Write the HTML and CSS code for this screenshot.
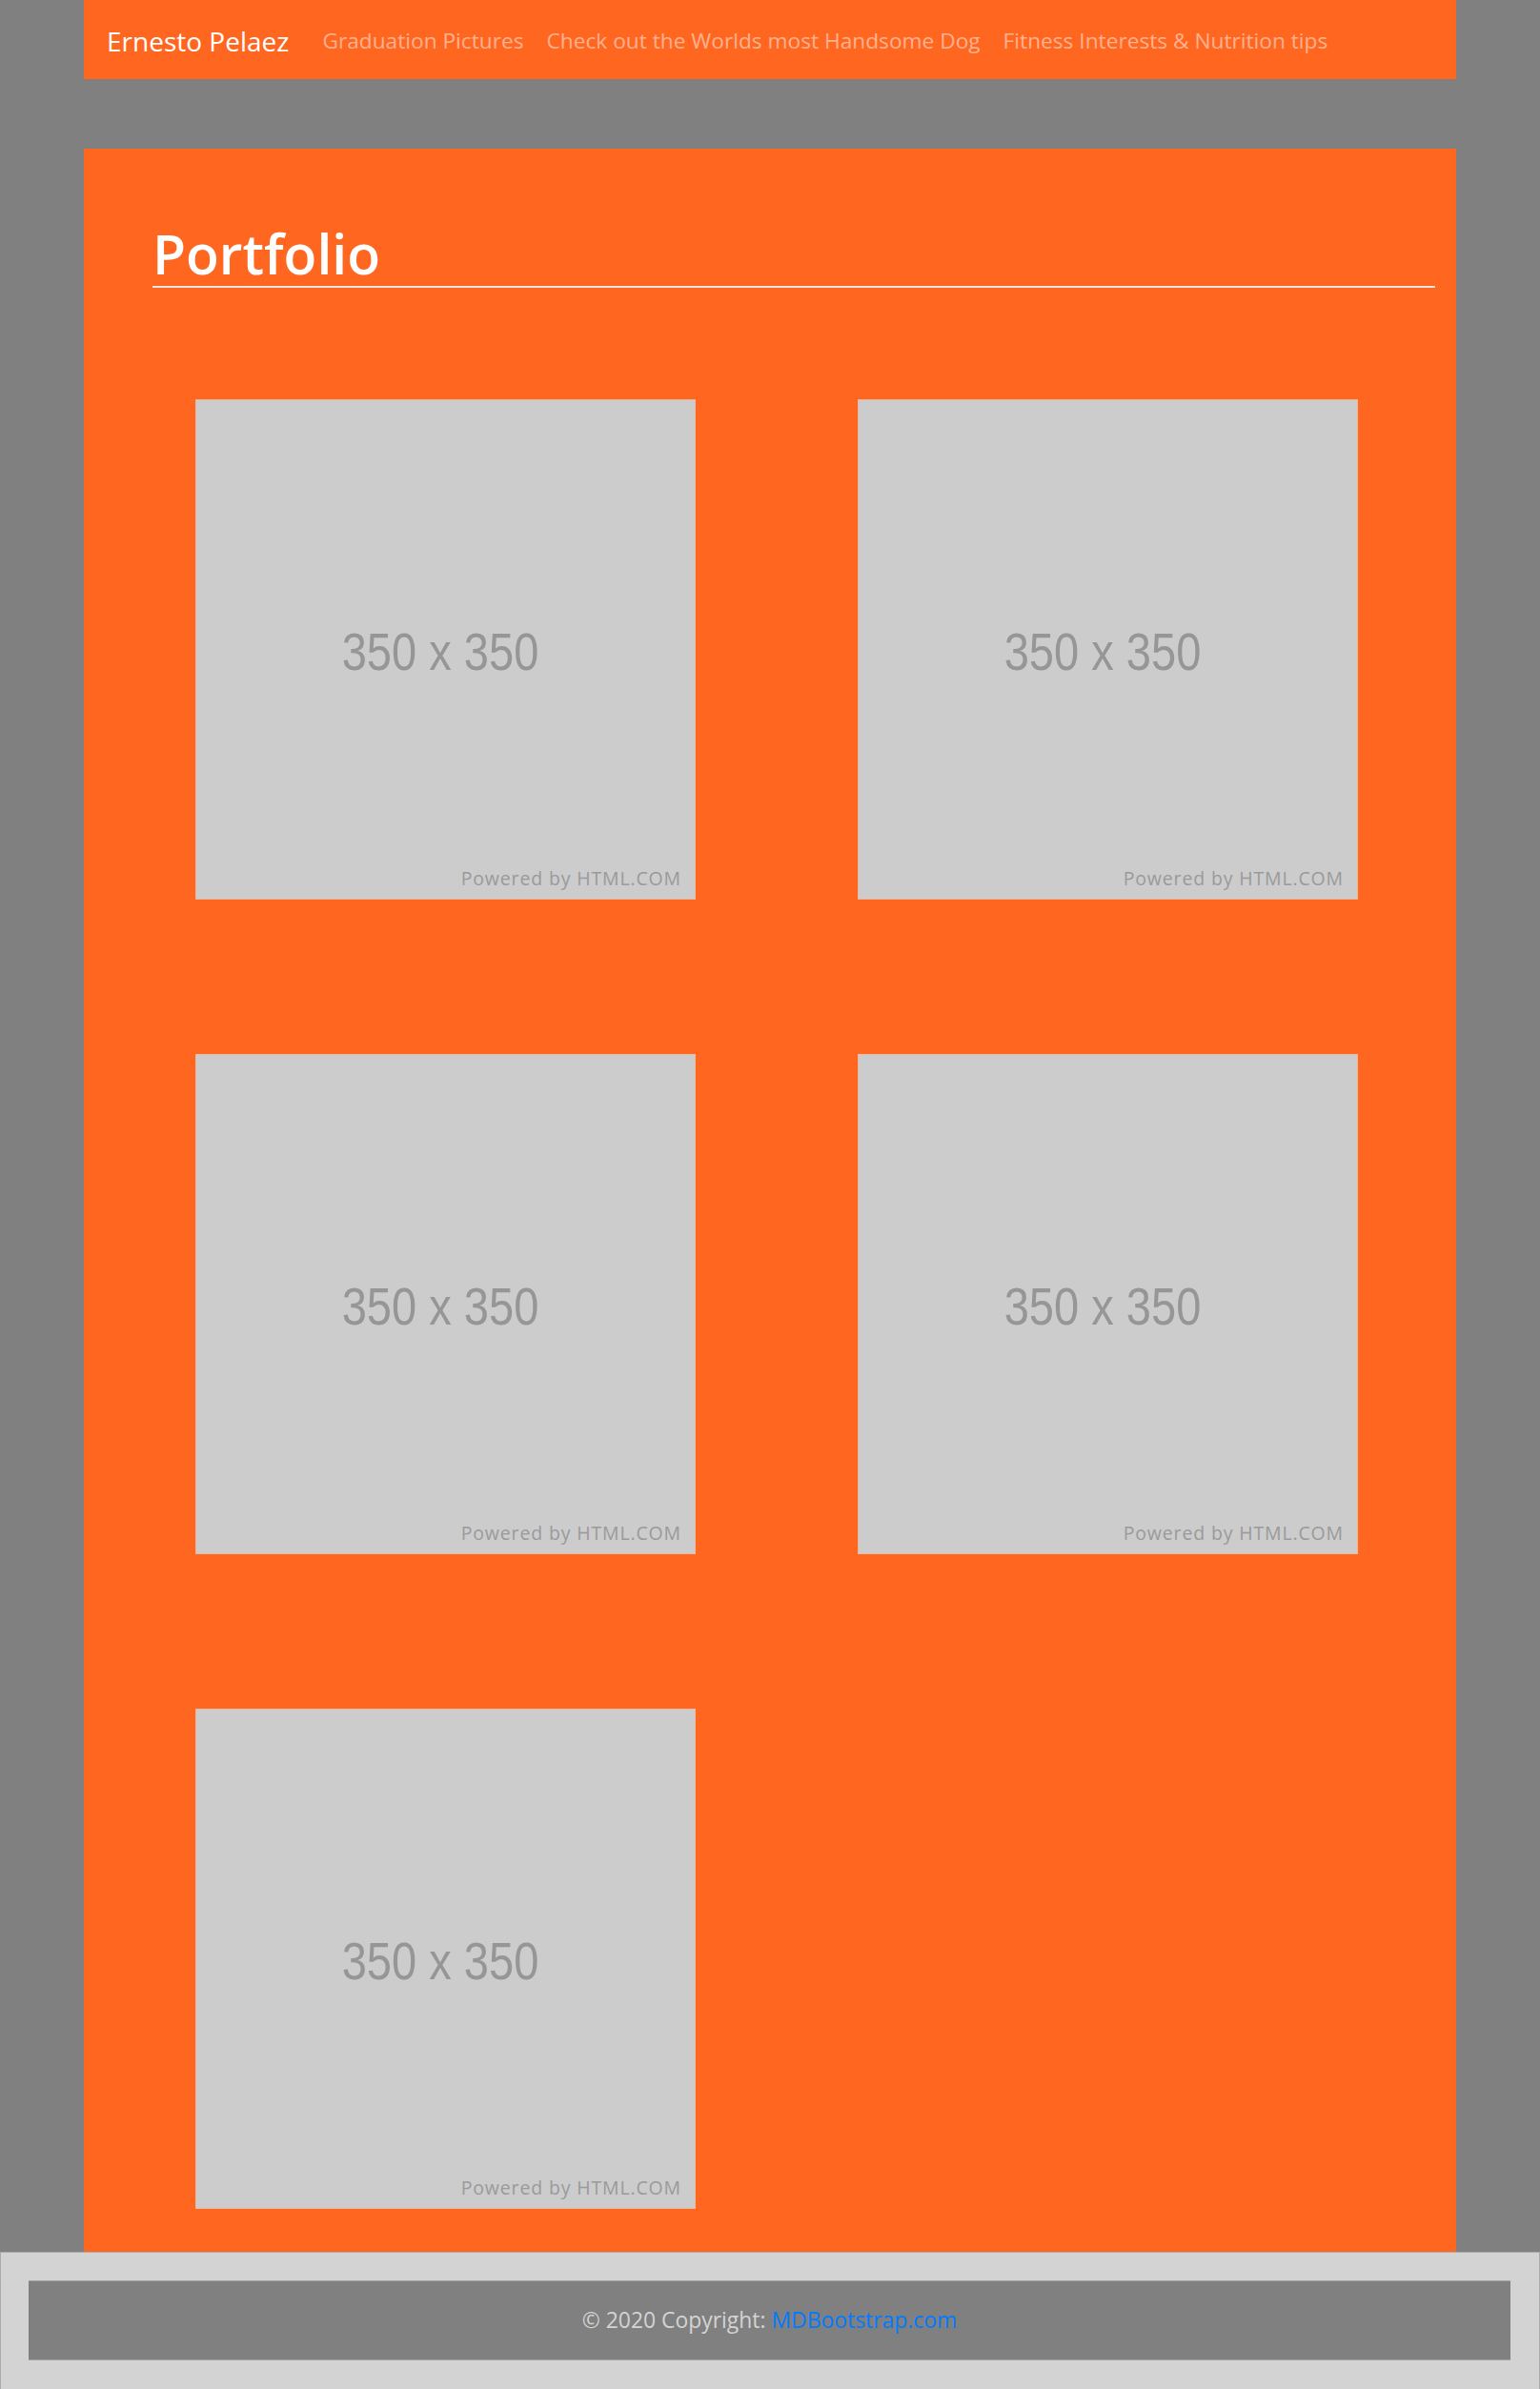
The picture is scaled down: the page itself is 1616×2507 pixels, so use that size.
FILE: index.html
```html
<!DOCTYPE html>
<html lang="en">
<head>
<meta charset="utf-8">
<title>Portfolio</title>
<link rel="stylesheet" href="styles.css">
</head>
<body>
<div class="container">
  <nav class="navbar">
    <a class="brand" href="#">Ernesto Pelaez</a>
    <ul class="nav">
      <li><a class="nav-link" href="#">Graduation Pictures</a></li>
      <li><a class="nav-link" href="#">Check out the Worlds most Handsome Dog</a></li>
      <li><a class="nav-link" href="#">Fitness Interests &amp; Nutrition tips</a></li>
    </ul>
  </nav>

  <section class="card">
    <div class="card-head">
      <h1 class="title">Portfolio</h1>
      <hr class="rule">
    </div>
    <div class="gallery">
      <div class="ph"><span class="ph-size">350 x 350</span><span class="ph-credit">Powered by HTML.COM</span></div>
      <div class="ph"><span class="ph-size">350 x 350</span><span class="ph-credit">Powered by HTML.COM</span></div>
      <div class="ph"><span class="ph-size">350 x 350</span><span class="ph-credit">Powered by HTML.COM</span></div>
      <div class="ph"><span class="ph-size">350 x 350</span><span class="ph-credit">Powered by HTML.COM</span></div>
      <div class="ph"><span class="ph-size">350 x 350</span><span class="ph-credit">Powered by HTML.COM</span></div>
    </div>
  </section>
</div>

<footer class="footer">
  <div class="footer-bar">© 2020 Copyright: <a class="footer-link" href="#">MDBootstrap.com</a></div>
</footer>
</body>
</html>
```
FILE: styles.css
```css
* { box-sizing: border-box; }

html, body {
  margin: 0;
  padding: 0;
}

body {
  background: #808080;
  font-family: "Open Sans", "Noto Sans", sans-serif;
}

.container {
  width: 1440px;
  margin: 0 auto;
}

.navbar {
  height: 83px;
  background: #ff6620;
  display: flex;
  align-items: center;
  padding: 3px 24px 0;
}

.brand {
  color: #ffffff;
  text-decoration: none;
  font-size: 28px;
  line-height: 1;
  margin-right: 23px;
}

.nav {
  list-style: none;
  margin: 0;
  padding: 0;
  display: flex;
}

.nav-link {
  display: block;
  padding: 0 12px;
  color: rgba(255, 255, 255, 0.5);
  text-decoration: none;
  font-size: 22.7px;
  line-height: 1;
}

.card {
  margin-top: 73px;
  background: #ff6620;
  padding: 77px 22px 45px 72px;
}

.title {
  margin: 0;
  color: #ffffff;
  font-size: 57px;
  font-weight: 600;
  line-height: 67px;
}

.rule {
  margin: 0;
  border: 0;
  height: 1.5px;
  background: #e4e4e4;
}

.gallery {
  margin-top: 117px;
  margin-left: 45px;
  display: grid;
  grid-template-columns: 525px 525px;
  column-gap: 170px;
  row-gap: 162px;
}

.ph {
  position: relative;
  width: 525px;
  height: 525px;
  background: #cccccc;
  border: 1px solid #e8b8a0;
  display: flex;
  align-items: center;
  justify-content: center;
}

.ph-size {
  display: inline-block;
  font-family: "Liberation Sans", Arial, sans-serif;
  font-size: 56px;
  color: #969696;
  transform: scaleX(0.84);
  margin-top: 4px;
  margin-right: 12px;
}

.ph-credit {
  position: absolute;
  right: 14px;
  bottom: 8px;
  font-family: "Open Sans", sans-serif;
  font-size: 19.5px;
  letter-spacing: 0.85px;
  color: #9a9a9a;
}

.footer {
  background: #d3d3d3;
  border: 1px solid #ababab;
  padding: 29px 30px 30px 29px;
}

.footer-bar {
  height: 84px;
  background: #808080;
  border-top: 1.5px solid #a3a3a3;
  border-bottom: 1.5px solid #a3a3a3;
  display: flex;
  align-items: center;
  justify-content: center;
  color: #d3d3d3;
  font-size: 22.9px;
  white-space: pre;
}

.footer-link {
  color: #007bff;
  text-decoration: none;
}
```
